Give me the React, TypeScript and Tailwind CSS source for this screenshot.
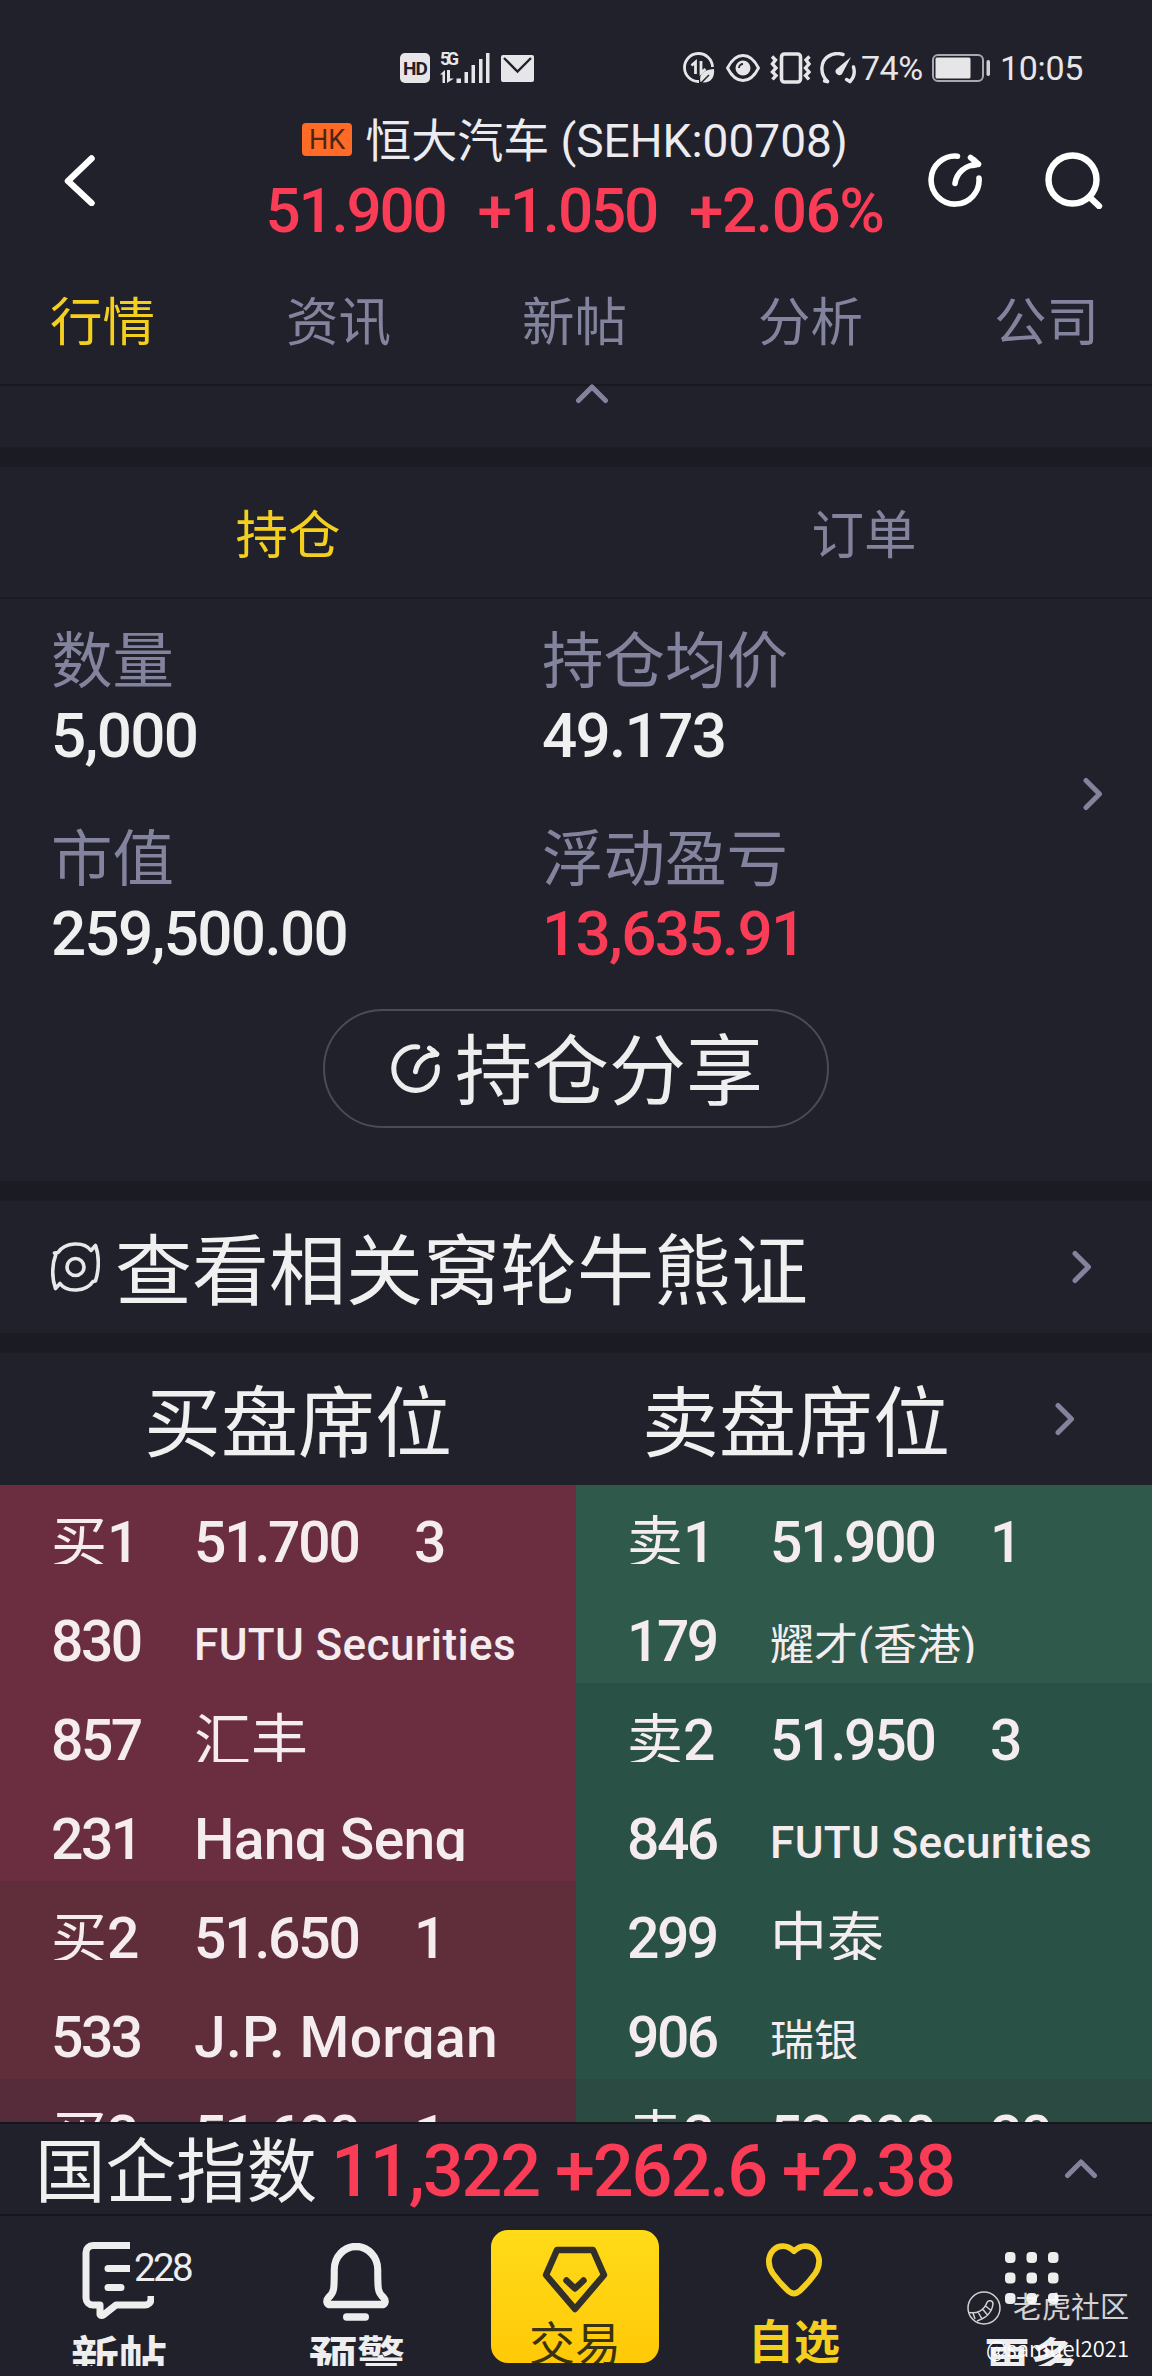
import type { ReactNode } from 'react';

type QuoteLine = { label: string; text: string; qty?: string; small?: boolean };
type QuoteLevel = { bg: string; lines: QuoteLine[] };

const tabs = ['行情', '资讯', '新帖', '分析', '公司'];

const bids: QuoteLevel[] = [
  {
    bg: 'bg-[#6a2e40]',
    lines: [
      { label: '买1', text: '51.700', qty: '3' },
      { label: '830', text: 'FUTU Securities', small: true },
      { label: '857', text: '汇丰' },
      { label: '231', text: 'Hang Seng' },
    ],
  },
  {
    bg: 'bg-[#602d3b]',
    lines: [
      { label: '买2', text: '51.650', qty: '1' },
      { label: '533', text: 'J.P. Morgan' },
    ],
  },
  { bg: 'bg-[#562c3a]', lines: [{ label: '买3', text: '51.600', qty: '1' }] },
];

const asks: QuoteLevel[] = [
  {
    bg: 'bg-[#2e594b]',
    lines: [
      { label: '卖1', text: '51.900', qty: '1' },
      { label: '179', text: '耀才(香港)', small: true },
    ],
  },
  {
    bg: 'bg-[#2a5145]',
    lines: [
      { label: '卖2', text: '51.950', qty: '3' },
      { label: '846', text: 'FUTU Securities', small: true },
      { label: '299', text: '中泰' },
      { label: '906', text: '瑞银', small: true },
    ],
  },
  { bg: 'bg-[#2b4a42]', lines: [{ label: '卖3', text: '52.000', qty: '20' }] },
];

function Chevron({ up = false }: { up?: boolean }) {
  return up ? (
    <svg width="34" height="20" viewBox="0 0 34 20" fill="none" stroke="#83839e" strokeWidth="5" strokeLinecap="round" strokeLinejoin="round">
      <path d="M3.5 16.5 17 3l13.5 13.5" />
    </svg>
  ) : (
    <svg width="20" height="34" viewBox="0 0 20 34" fill="none" stroke="#83839e" strokeWidth="5" strokeLinecap="round" strokeLinejoin="round">
      <path d="M3 3.5 16.5 17 3 30.5" />
    </svg>
  );
}

function ShareIcon({ size, color }: { size: number; color: string }) {
  return (
    <svg width={size} height={size} viewBox="0 0 54 54" fill="none" stroke={color} strokeWidth="5.6" strokeLinecap="round" strokeLinejoin="round">
      <path d="M29.5 3.2A24 24 0 1 0 51 25" />
      <path d="M27 30.5C28.5 20 37 11.8 50 11.2" />
      <path d="M42.5 4.5 50.5 11.2" />
      <path d="M44.5 12.5 50 11.2 46 7" />
    </svg>
  );
}

function StatusBar() {
  return (
    <div className="flex h-[100px] items-center pt-9 text-[34px] leading-none text-[#e6e6e8]">
      <div className="ml-[400px] flex h-[30px] w-[30px] items-center justify-center rounded-[5px] bg-[#e6e6e8] text-[19px] font-bold tracking-[-1px] text-[#21212b]">
        HD
      </div>
      <div className="relative ml-[10px] h-8 w-[50px]">
        <span className="absolute -top-px left-0 text-[18px] leading-[16px] font-bold tracking-[-3.5px]">5G</span>
        <svg width="50" height="32" viewBox="0 0 50 32" fill="#e6e6e8">
          <path d="M0 22.5 5 18v13H2.5v-8.5zM7 18h3v8.5h4L7 31z" />
          <path d="M16.5 26.5h4.500V31h-4.500zM24.500 20h3.500v11h-3.500zM31.500 13h3.500v18h-3.500zM39 7h3.500v24H39zM46 1h3.500v30H46z" />
        </svg>
      </div>
      <svg className="ml-[11px]" width="33" height="27" viewBox="0 0 33 27">
        <rect width="33" height="27" rx="2" fill="#e6e6e8" />
        <path d="m3 3 13.500 13.500L30 3" fill="none" stroke="#21212b" strokeWidth="2.400" />
      </svg>

      <svg className="ml-[149px]" width="32" height="32" viewBox="0 0 32 32" fill="none" stroke="#e6e6e8" strokeWidth="2.800">
        <path d="M16 29.500A14 14 0 1 1 29.500 15" />
        <path d="M8.500 13.500 12.500 10v12M18 9v12l4.500-4" strokeWidth="2.800" />
        <path d="M17.500 30c-2-8 3-12 13.500-13 1 9-4 15-13.500 13z" fill="#e6e6e8" stroke="none" />
        <path d="m17 32 9-9" stroke="#21212b" strokeWidth="1.500" />
      </svg>
      <svg className="ml-[11px]" width="34" height="28" viewBox="0 0 34 28" fill="none" stroke="#e6e6e8" strokeWidth="2.800">
        <path d="M1.500 14C6 5 11 1.500 17 1.500S28 5 32.500 14C28 23 23 26.500 17 26.500S6 23 1.500 14z" />
        <circle cx="17" cy="14" r="7.500" fill="#e6e6e8" stroke="none" />
        <path d="M13 14a4 4 0 0 1 4-4" stroke="#21212b" strokeWidth="1.800" />
      </svg>
      <svg className="ml-[10px]" width="41" height="32" viewBox="0 0 41 32" fill="none" stroke="#e6e6e8" strokeWidth="3.400">
        <rect x="11.500" y="2" width="19" height="28" rx="3" strokeWidth="3.600" />
        <path d="m2 4.500 3.500 3.500L2.500 12l3.500 4-3.500 4 3.500 3.500-3.500 4M39.500 4.500 36 8l3 4-3.500 4 3.500 4-3.500 3.500 3.500 4" />
      </svg>
      <svg className="ml-[9px]" width="38" height="32" viewBox="0 0 38 32" fill="none" stroke="#e6e6e8" strokeWidth="3.400" strokeLinecap="round">
        <path d="M7.500 29.500C-1 21 1 9 8 4.500c5-3.500 10-3.500 15-2M33.500 15c1.500 5 1 10-3.500 14.500" />
        <path d="m26.500 27.500 3.500 2M7.500 29.500l-3-.5" />
        <path d="M31 5 22 22a3.800 3.800 0 0 1-6-4.500z" fill="#e6e6e8" stroke="none" />
      </svg>
      <span className="ml-[3px] w-[65px] tracking-[-0.5px]">74%</span>
      <svg className="ml-[6px]" width="60" height="28" viewBox="0 0 60 28" fill="none">
        <rect x="1" y="1" width="50" height="26" rx="5" stroke="#a9a9af" strokeWidth="2" />
        <rect x="3.500" y="3.500" width="35" height="21" rx="1.500" fill="#e6e6e8" />
        <rect x="54.500" y="6" width="3.500" height="16" rx="1.700" fill="#d0d0d4" />
      </svg>
      <span className="ml-[8px] tracking-[-0.3px]">10:05</span>
    </div>
  );
}

function Header() {
  return (
    <header className="flex h-[160px] items-center pl-[62px] text-white">
      <div className="w-[201px]">
        <svg width="34" height="52" viewBox="0 0 34 52" fill="none" stroke="#fff" strokeWidth="6.500" strokeLinecap="round" strokeLinejoin="round">
          <path d="M29.500 4.500 6 27l23.500 22" />
        </svg>
      </div>
      <div className="flex w-[626px] flex-col items-center">
        <div className="-mt-[3px] flex h-[60px] items-center text-[46px] leading-[60px] text-[#ececf0]">
          <span className="-mt-[3px] mr-[13px] -ml-[2px] flex h-[33px] w-[50px] items-center justify-center rounded-[4px] bg-[#ff6a26] text-[27px] text-[#4a2614]">
            HK
          </span>
          <span className="whitespace-pre">恒大汽车 (SEHK:00708)</span>
        </div>
        <div className="mt-[5px] -ml-[3px] flex h-[70px] gap-[32px] text-[62px] leading-[70px] font-medium tracking-[-2.2px] text-[#fa3c56]">
          <span>51.900</span>
          <span>+1.050</span>
          <span className="tracking-[-1.4px]">+2.06%</span>
        </div>
      </div>
      <div className="ml-[39px]">
        <ShareIcon size={54} color="#fff" />
      </div>
      <svg className="ml-[63px]" width="58" height="58" viewBox="0 0 58 58" fill="none" stroke="#fff" strokeWidth="6.400" strokeLinecap="round">
        <circle cx="27.500" cy="28.500" r="24" />
        <path d="m45.500 47 8.500 8" />
      </svg>
    </header>
  );
}

function Stat({ label, value, up = false }: { label: string; value: string; up?: boolean }) {
  return (
    <div>
      <div className="h-[72px] text-[61.5px] leading-[72px] text-[#83839e]">{label}</div>
      <div className={`h-[76px] text-[62px] leading-[76px] font-medium tracking-[-1.7px] ${up ? 'text-[#fa3c56]' : 'text-[#f0f0f0]'}`}>
        {value}
      </div>
    </div>
  );
}

function Position() {
  return (
    <section>
      <div className="grid h-[132px] grid-cols-2 border-b-2 border-[#1a1a22] pt-[7px] text-center text-[52.5px] leading-[124px]">
        <span className="text-[#f5cf1e]">持仓</span>
        <span className="text-[#83839e]">订单</span>
      </div>
      <div className="flex h-[373px] items-start">
        <div className="mt-[27px] grid w-[1083px] grid-cols-[491px_1fr] gap-y-[50px] pl-[51px]">
          <Stat label="数量" value="5,000" />
          <Stat label="持仓均价" value="49.173" />
          <Stat label="市值" value="259,500.00" />
          <Stat label="浮动盈亏" value="13,635.91" up />
        </div>
        <div className="mt-[178px]">
          <Chevron />
        </div>
      </div>
      <div className="flex justify-center pt-[37px] pb-[53px]">
        <div className="flex h-[119px] w-[506px] items-center rounded-[60px] border-2 border-[#4b4b56] pl-[66px] text-[77px] leading-none text-[#eeeeee]">
          <ShareIcon size={49} color="#eeeeee" />
          <span className="ml-[15px] pt-[9px]">持仓分享</span>
        </div>
      </div>
    </section>
  );
}

// Cells are cut just under the baseline, so descenders get trimmed
function Cell({ className, children }: { className: string; children: ReactNode }) {
  return (
    <span className={`block h-[79px] overflow-hidden leading-[67px] whitespace-nowrap text-[#f4ecee] ${className}`}>
      {children}
    </span>
  );
}

function QuoteLabel({ label }: { label: string }) {
  if (/^\d/.test(label)) {
    return <Cell className="w-[143px] pt-[24px] text-[57px] font-medium tracking-[-2.5px]">{label}</Cell>;
  }
  return (
    <Cell className="w-[143px] pt-[24px] text-[57px] font-medium">
      <span className="text-[56px] font-normal">{label[0]}</span>
      {label.slice(1)}
    </Cell>
  );
}

function QuoteText({ text, small }: { text: string; small?: boolean }) {
  if (/^\d/.test(text)) {
    return <Cell className="w-[218px] pt-[24px] text-[57px] font-medium tracking-[-2.2px]">{text}</Cell>;
  }
  if (/^[A-Z]/.test(text)) {
    return small ? (
      <Cell className="pt-[28px] text-[44px] font-medium tracking-[0.4px]">{text}</Cell>
    ) : (
      <Cell className={`pt-[24px] text-[57px] font-medium ${text.includes('.') ? 'tracking-[0.3px]' : 'tracking-[-0.7px]'}`}>{text}</Cell>
    );
  }
  return small ? (
    <Cell className="pt-[29px] text-[44px]">{text}</Cell>
  ) : (
    <Cell className="pt-[25px] text-[57px]">{text}</Cell>
  );
}

function QuoteColumn({ levels }: { levels: QuoteLevel[] }) {
  return (
    <div className="w-1/2">
      {levels.map((level) => (
        <div key={level.bg} className={level.bg}>
          {level.lines.map((line) => (
            <div key={line.label} className="flex h-[99px] items-start pl-[51px]">
              <QuoteLabel label={line.label} />
              <QuoteText text={line.text} small={line.small} />
              {line.qty && <Cell className="ml-[2px] pt-[24px] text-[57px] font-medium tracking-[-2.2px]">{line.qty}</Cell>}
            </div>
          ))}
        </div>
      ))}
    </div>
  );
}

function BottomNav() {
  return (
    <nav className="relative flex h-[161px] items-start border-t-2 border-[#16161d] text-[48px] leading-[56px] font-bold text-[#eeeeee]">
      <div className="relative ml-[71px] w-[98px]">
        <svg className="mt-[26px] ml-[11px]" width="72" height="77" viewBox="0 0 72 77" fill="none" stroke="#eeeeee" strokeWidth="7" strokeLinejoin="round">
          <path d="M48 3.500H11a7 7 0 0 0-7 7V56a7 7 0 0 0 7 7h7v9.500q1 2 4 0L34 63h29a6 6 0 0 0 6-6v-3" />
          <path d="M26 26.500h22M26 45.500h13" strokeLinecap="round" />
        </svg>
        <span className="absolute top-[31px] left-[59px] bg-[#21212b] pl-1 text-[38.5px] leading-[42px] font-normal tracking-[-2.6px]">228</span>
        <div className="mt-[13px] h-[34px] overflow-hidden leading-[56px]">新帖</div>
      </div>
      <div className="ml-[140px] w-[98px]">
        <svg className="mt-[27px] ml-[13px]" width="68" height="78" viewBox="0 0 72 78" preserveAspectRatio="none" fill="none" stroke="#eeeeee" strokeWidth="7.500" strokeLinecap="round" strokeLinejoin="round">
          <path d="M7 61.500q-4-3 0-7c6-5 6-8 6-28a23 23 0 0 1 46 0c0 20 0 23 6 28q4 4 0 7z" />
          <path d="M26 74h20" />
        </svg>
        <div className="mt-[11px] h-[34px] overflow-hidden leading-[56px]">预警</div>
      </div>
      <div className="mt-[14px] ml-[84px] flex h-[133px] w-[168px] flex-col items-center overflow-hidden rounded-[17px] bg-linear-to-b from-[#ffdb18] to-[#ffc906] font-normal text-[#3a3312]">
        <svg className="mt-[16px] shrink-0" width="66" height="68" viewBox="0 0 66 68" fill="none" stroke="#33302a" strokeWidth="6.500" strokeLinecap="round" strokeLinejoin="round">
          <path d="M15 4h36l11 25-29 34L4 29z" />
          <path d="m24.500 34.500 8.500 8 8.500-8" />
        </svg>
        <span className="mt-[2px] shrink-0 text-[46px]">交易</span>
      </div>
      <div className="ml-[89px] flex w-[92px] flex-col items-center text-[46px] text-[#f5cf1e]">
        <svg className="mt-[26px]" width="58" height="56" viewBox="0 0 60 56" fill="none" stroke="#f5cf1e" strokeWidth="6" strokeLinejoin="round">
          <path d="M30 8.500C23 1.500 14 2 9 7 2 14 3 24 8 31.500c5 7 10.500 13 16.500 18.500q5.500 4.500 11 0c6-5.500 11.500-11.500 16.500-18.500 5-7.500 6-17.500-1-24.500-5-5-14-5.500-21 1.500z" />
        </svg>
        <span className="mt-[16px] leading-[56px]">自选</span>
      </div>
      <div className="ml-[144px] w-[92px]">
        <svg className="mt-[36px] ml-[21px]" width="54" height="54" viewBox="0 0 54 54" fill="#eeeeee">
          {[0, 20.5, 41].map((y) =>
            [0, 21.5, 43].map((x) => <rect key={`${x}-${y}`} x={x} y={y} width="10.500" height="11" rx="4" />)
          )}
        </svg>
        <div className="mt-[26px] h-[34px] overflow-hidden text-[46px] leading-[56px]">更多</div>
      </div>

      <div className="absolute right-[23px] bottom-[13px] flex flex-col items-end font-normal text-white">
        <div className="flex items-center text-[29px] leading-[36px] opacity-80">
          <svg className="mr-[12px]" width="34" height="34" viewBox="0 0 34 34" fill="none" stroke="#fff" strokeWidth="1.500">
            <circle cx="17" cy="17" r="16" />
            <path d="M2 21.500c8 1.500 15-2 18-10 1.500-3 6-2 6 1.500-1 8-7 14-16 17M6 22l2 6M11 21l4 7M15.500 18l5 6M18.500 15l5 4" />
          </svg>
          老虎社区
        </div>
        <div className="mt-[6px] text-[22px] leading-[30px] font-[350] font-['Noto_Sans_CJK_SC',sans-serif]">@samuel2021</div>
      </div>
    </nav>
  );
}

export default function App() {
  return (
    <main className="flex h-[2376px] w-[1152px] flex-col overflow-hidden bg-[#21212b] font-[Roboto,'Noto_Sans_CJK_SC',sans-serif]">
      <StatusBar />
      <Header />
      <div className="flex h-[126px] justify-between border-b-2 border-[#181820] pr-[53px] pl-[50px] text-[52.5px] leading-[127px] text-[#83839e]">
        {tabs.map((tab, i) => (
          <span key={tab} className={i === 0 ? 'text-[#f5cf1e]' : ''}>{tab}</span>
        ))}
      </div>
      <div className="h-[61px] pl-[575px]">
        <div className="-mt-[2px]">
          <Chevron up />
        </div>
      </div>
      <div className="h-[20px] bg-[#1b1b24]" />
      <Position />
      <div className="h-[20px] bg-[#1b1b24]" />
      <section className="flex h-[132px] items-center pl-[51px] text-[77px] leading-none text-[#f0f0f0]">
        <svg width="49" height="50" viewBox="0 0 49 50" fill="none" stroke="#e8e8ea" strokeWidth="3.600" strokeLinejoin="round">
          <circle cx="24.500" cy="25" r="8.500" />
          <path d="M3.500 11 7 10.500C14 0 33-1 40 8.500L44.500 3.500C48.500 14 48 28 44.500 39L42 39.500C35 50 16 51 9 41.500L4.500 46.500C.5 36 1 22 5 12z" />
        </svg>
        <span className="ml-[15px] pt-[12px]">查看相关窝轮牛熊证</span>
        <div className="ml-[264px]">
          <Chevron />
        </div>
      </section>
      <div className="h-[20px] bg-[#1b1b24]" />
      <section className="flex h-[132px] items-center text-[77px] leading-none text-[#f0f0f0]">
        <span className="ml-[144px] pt-[13px]">买盘席位</span>
        <span className="ml-[190px] pt-[13px]">卖盘席位</span>
        <div className="ml-[105px]">
          <Chevron />
        </div>
      </section>
      <section className="flex h-[637px] shrink-0 overflow-hidden">
        <QuoteColumn levels={bids} />
        <QuoteColumn levels={asks} />
      </section>
      <section className="flex h-[92px] shrink-0 items-center border-t-2 border-[#16161d] pl-[35px] leading-[88px]">
        <span className="pt-[8px] text-[70.500px] text-[#f0f0f0]">国企指数</span>
        <span className="ml-[14px] w-[733px] pt-[5px] text-[72px] font-medium tracking-[-2.1px] whitespace-pre text-[#fa3c56]">11,322 +262.6 +2.38</span>
        <Chevron up />
      </section>
      <BottomNav />
    </main>
  );
}
